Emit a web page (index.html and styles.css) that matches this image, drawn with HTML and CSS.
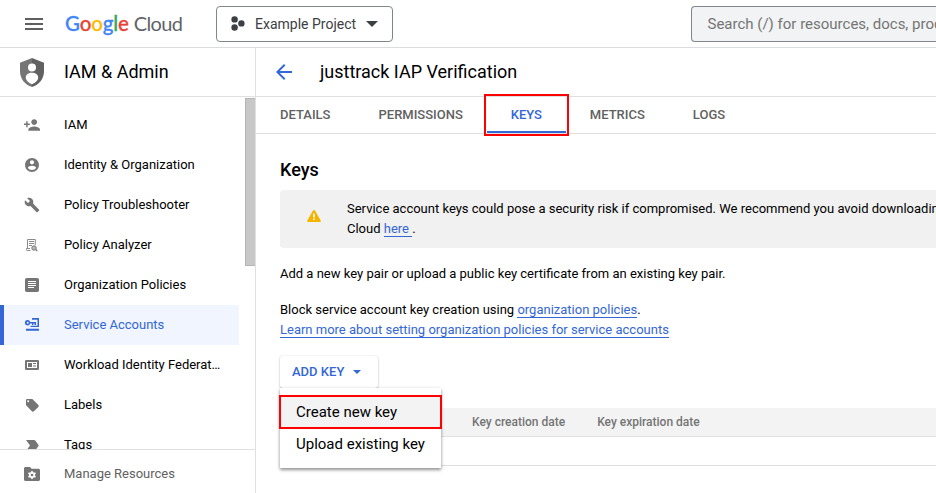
FILE: index.html
```html
<!DOCTYPE html>
<html lang="en">
<head>
<meta charset="utf-8">
<title>Service Accounts – Google Cloud</title>
<link rel="stylesheet" href="styles.css">
</head>
<body>
<header class="topbar">
  <svg class="hamburger" width="18" height="12" viewBox="0 0 18 12"><path d="M0 0h18v2H0zM0 5h18v2H0zM0 10h18v2H0z"/></svg>
  <div class="logo"><span class="google"><span class="blue">G</span><span class="red">o</span><span class="yellow">o</span><span class="blue">g</span><span class="green">l</span><span class="red">e</span></span><span class="cloud">Cloud</span></div>
  <button class="project">
    <svg width="14" height="16" viewBox="0 0 14 16"><circle cx="3.6" cy="3.4" r="3.2"/><circle cx="3.6" cy="11.5" r="3.2"/><circle cx="10.4" cy="7.4" r="3.2"/></svg>
    <span class="project-name">Example Project</span>
    <svg width="12" height="6" viewBox="0 0 12 6"><path d="M0 0h12L6 6z"/></svg>
  </button>
  <div class="search"><span>Search (/) for resources, docs, products, and more</span></div>
</header>
<div class="layout">
  <aside class="sidebar">
    <div class="product">
      <svg width="24" height="29" viewBox="0 0 24 29"><path fill="#757575" d="M12 0 0 4.8v8.4C0 20.500 5 27 12 29z"/><path fill="#616161" d="M12 0l12 4.800v8.400C24 20.500 19 27 12 29z"/><circle cx="12" cy="9.500" r="4" fill="#fff"/><path fill="#fff" d="M5.800 19.800c0-3.300 2.700-5 6.200-5s6.200 1.700 6.200 5c0 2.700-3.600 5.500-6.200 6.500-2.600-1-6.200-3.800-6.200-6.500z"/></svg>
      <span>IAM &amp; Admin</span>
    </div>
    <div class="nav-wrap">
      <nav class="nav">
        <a class="item"><svg viewBox="1 1 22 22"><path d="M15 12c2.210 0 4-1.790 4-4s-1.790-4-4-4-4 1.790-4 4 1.790 4 4 4zm-9-2V7H4v3H1v2h3v3h2v-3h3v-2H6zm9 4c-2.670 0-8 1.340-8 4v2h16v-2c0-2.660-5.330-4-8-4z"/></svg><span>IAM</span></a>
        <a class="item"><svg viewBox="0.500 0.500 23 23"><path d="M12 2C6.480 2 2 6.480 2 12s4.480 10 10 10 10-4.480 10-10S17.520 2 12 2zm0 3c1.660 0 3 1.340 3 3s-1.340 3-3 3-3-1.340-3-3 1.340-3 3-3zm0 14.200c-2.500 0-4.710-1.280-6-3.220.03-1.990 4-3.080 6-3.080 1.990 0 5.970 1.090 6 3.080-1.290 1.940-3.500 3.220-6 3.220z"/></svg><span>Identity &amp; Organization</span></a>
        <a class="item"><svg viewBox="0 0 24 24"><path d="M22.700 19l-9.100-9.100c.9-2.300.4-5-1.500-6.900-2-2-5-2.400-7.400-1.300L9 6 6 9 1.600 4.700C.4 7.100.9 10.100 2.900 12.100c1.900 1.900 4.600 2.400 6.900 1.500l9.100 9.100c.4.4 1 .4 1.400 0l2.300-2.300c.5-.4.5-1.100.1-1.400z"/></svg><span>Policy Troubleshooter</span></a>
        <a class="item"><svg viewBox="0 0 16 16"><path fill="none" stroke="#8a8a8a" d="M6.500 13.500H3.300c-.6 0-.8-.4-.8-.8V11.500H6M3.500 11V2.500h7.800V8"/><path fill="#8a8a8a" d="M5 4h5v1H5zM5 6h5v1H5zM5 8h3v1H5z"/><circle cx="10" cy="11" r="2.200" fill="#bbb" stroke="#757575"/><path d="M11.400 12.800l.9-.7 1.400 1.700-1 .8z"/></svg><span>Policy Analyzer</span></a>
        <a class="item"><svg viewBox="0 0 16 16"><rect x="1" y="1" width="14" height="14" rx="1.800"/><path fill="#fff" d="M4 4h8v1H4zM4 6h8v1H4zM4 8h8v1H4zM4 10h6v1H4z"/></svg><span>Organization Policies</span></a>
        <a class="item active"><svg viewBox="0 0 16 16"><path fill-rule="evenodd" d="M3.600 3a2.700 2.700 0 0 1 2.600 1.900H12V8h-1.500V6.500H9.300V8H8V6.500H6.100A2.700 2.700 0 1 1 3.600 3zM3.700 4.700a1 1 0 1 0 0 2 1 1 0 0 0 0-2z"/><path d="M8 1h7v9H6.500V8.700h7V2.700H8zM2 11.800h13v2H2z"/></svg><span>Service Accounts</span></a>
        <a class="item"><svg viewBox="0 0 16 16"><rect x="1" y="3" width="14" height="10" rx="1.200"/><path fill="#fff" d="M3 5h10v6H3z"/><path d="M4 6h4v4H4zM9 6h3v1H9zM9 8.500h3v1H9z"/></svg><span>Workload Identity Federation</span></a>
        <a class="item"><svg viewBox="0 0 24 24"><path d="M21.410 11.580l-9-9C12.050 2.220 11.550 2 11 2H4c-1.100 0-2 .9-2 2v7c0 .55.22 1.050.59 1.420l9 9c.36.36.86.58 1.410.58.55 0 1.050-.22 1.410-.59l7-7c.37-.36.59-.86.59-1.410 0-.55-.23-1.060-.59-1.420zM5.500 7C4.670 7 4 6.330 4 5.500S4.670 4 5.500 4 7 4.670 7 5.500 6.330 7 5.500 7z" transform="translate(1 1) scale(.96)"/></svg><span>Labels</span></a>
        <a class="item"><svg viewBox="0 0 16 16"><path d="M2 3h8c.6 0 1 .2 1.300.6L14.800 8.500l-3.500 4.900c-.3.400-.7.600-1.300.6H2l4-5.500z"/></svg><span>Tags</span></a>
      </nav>
      <div class="scrollbar"></div>
    </div>
    <a class="manage"><svg width="16" height="14" viewBox="0 0 16 14"><path d="M1.500 0H6l1.600 1.800h6.900c.8 0 1.500.6 1.500 1.500v9.200c0 .9-.7 1.500-1.500 1.500h-13C.7 14 0 13.400 0 12.500v-11C0 .6.700 0 1.500 0z"/><g fill="#fff"><circle cx="8" cy="8" r="3"/><path d="M7.200 3.900h1.600v8.200H7.200z"/><path d="M7.200 3.900h1.600v8.200H7.200z" transform="rotate(60 8 8)"/><path d="M7.200 3.900h1.600v8.200H7.200z" transform="rotate(-60 8 8)"/></g><circle cx="8" cy="8" r="1.300"/></svg><span>Manage Resources</span></a>
  </aside>
  <main class="main">
    <div class="titlebar">
      <svg width="16" height="16" viewBox="0 0 16 16"><path d="M16 7H3.830l5.590-5.590L8 0 0 8l8 8 1.410-1.410L3.830 9H16z"/></svg>
      <h1>justtrack IAP Verification</h1>
    </div>
    <div class="tabs">
      <a class="tab details">DETAILS</a><a class="tab permissions">PERMISSIONS</a><a class="tab keys">KEYS</a><a class="tab metrics">METRICS</a><a class="tab">LOGS</a>
    </div>
    <section class="content">
      <h2>Keys</h2>
      <div class="notice">
        <svg width="14" height="12" viewBox="0 0 14 12"><path fill="#f4b400" d="M6 .6c.4-.8 1.600-.8 2 0l5.700 9.800c.4.800-.1 1.600-1 1.600H1.300c-.9 0-1.400-.8-1-1.600z"/><path fill="#fff" d="M6.200 3.500h1.600v4H6.200zM6.200 8.500h1.600v1.600H6.200z"/></svg>
        <p>Service account keys could pose a security risk if compromised. We recommend you avoid downloading service account keys<br>Cloud <a class="link">here </a>.</p>
      </div>
      <p class="intro">Add a new key pair or upload a public key certificate from an existing key pair.</p>
      <p class="policy">Block service account key creation using <a class="link">organization policies</a>.<br><a class="link">Learn more about setting organization policies for service accounts</a></p>
      <div class="add">
        <button class="add-key"><span>ADD KEY</span><svg width="8" height="4" viewBox="0 0 8 4"><path d="M0 0h8L4 4z"/></svg></button>
        <div class="menu">
          <div class="option selected">Create new key</div>
          <div class="option">Upload existing key</div>
        </div>
      </div>
      <div class="table">
        <div class="thead"><span class="created">Key creation date</span><span>Key expiration date</span></div>
        <div class="row"></div>
      </div>
    </section>
  </main>
</div>
</body>
</html>
```
FILE: styles.css
```css
* { box-sizing: border-box; }
html, body { margin: 0; height: 493px; overflow: hidden; }
body { display: flex; flex-direction: column; background: #fff; color: #000; font: 13px/20px Roboto, Arial, sans-serif; }
svg { display: block; flex: none; }
button { font-family: inherit; margin: 0; background: #fff; }
h1, h2, p { margin: 0; }

.topbar { display: flex; align-items: center; height: 48px; padding-left: 25px; border-bottom: 1px solid #dadce0; flex: none; }
.hamburger { fill: #5f5f5f; }
.logo { display: flex; gap: 5px; width: 117px; margin: 0 0 2px 22px; font: 20.500px/24px Lato, sans-serif; white-space: nowrap; }
.google { font-weight: 500; letter-spacing: -.15px; -webkit-text-stroke: .3px; }
.cloud { color: #5f6368; font-size: 20px; letter-spacing: -.65px; }
.blue { color: #4285f4; }
.red { color: #ea4335; }
.yellow { color: #fbbc04; }
.green { color: #34a853; }
.project { display: flex; align-items: center; width: 177px; height: 36px; margin-left: 34px; padding: 0 14px; border: 1px solid #80868b; border-radius: 4px; color: #3c4043; fill: #3c4043; font-size: 14px; }
.project-name { margin: 0 auto 0 10px; white-space: nowrap; }
.search { display: flex; align-items: center; flex: 1; min-width: 0; height: 36px; margin-left: 298px; padding-left: 15.500px; border: 1px solid #80868b; border-right: 0; border-radius: 4px 0 0 4px; background: #f1f3f4; color: #757575; font-size: 15px; white-space: nowrap; overflow: hidden; }

.layout { display: flex; flex: 1; min-height: 0; }
.sidebar { display: flex; flex-direction: column; width: 256px; flex: none; border-right: 1px solid #e0e0e0; }
.product { display: flex; align-items: center; gap: 20px; height: 49px; padding-left: 20px; border-bottom: 1px solid #e0e0e0; font-size: 18px; flex: none; }
.nav-wrap { display: flex; justify-content: space-between; flex: 1; min-height: 0; overflow: hidden; }
.nav { width: 239px; padding-top: 8px; }
.item { display: flex; align-items: center; height: 40px; padding: 0 18px 0 24px; }
.item svg { width: 16px; height: 16px; margin-right: 24px; fill: #757575; }
.item span { overflow: hidden; white-space: nowrap; text-overflow: ellipsis; }
.active { background: #f0f5ff; border-left: 4px solid #3367d6; padding-left: 20px; color: #3367d6; }
.active svg { fill: #3367d6; }
.scrollbar { width: 10px; height: 168px; margin-top: 1px; background: #c8c8c8; border: 1px solid #b4b4b4; border-right: 0; }
.manage { display: flex; align-items: center; gap: 24px; height: 44px; padding: 5px 0 0 24px; border-top: 1px solid #e0e0e0; color: #616161; fill: #757575; flex: none; }

.main { flex: 1; min-width: 0; overflow: hidden; }
.titlebar { display: flex; align-items: center; gap: 28px; height: 49px; padding-left: 20px; border-bottom: 1px solid #e0e0e0; fill: #3367d6; }
.titlebar h1 { font: 400 18px/24px Roboto, sans-serif; }
.tabs { display: flex; height: 37px; padding-left: 24px; border-bottom: 1px solid #e0e0e0; font-weight: 500; line-height: 36px; color: #616161; }
.details { margin-right: 48px; }
.permissions { margin-right: 21px; }
.keys { position: relative; display: flex; justify-content: center; width: 85px; height: 42px; margin: -3px 21px 0 0; padding-top: 3px; color: #3367d6; background: linear-gradient(#3367d6, #3367d6) 3px 37px / 79px 2px no-repeat; box-shadow: inset 0 0 0 2px #f00; }
.metrics { margin-right: 48px; }
.content { padding-left: 24px; }
h2 { padding-top: 24px; font: 500 18px/24px Roboto, sans-serif; }
.notice { display: flex; height: 58px; margin-top: 8px; padding: 9px 0 0 27px; border-radius: 4px 0 0 4px; background: #f1f1f1; white-space: nowrap; }
.notice svg { margin: 11px 26px 0 0; }
.link { color: #3367d6; border-bottom: 1px solid #3367d6; white-space: pre; }
.intro { margin-top: 16px; }
.policy { margin-top: 16px; }
.add { position: relative; margin-top: 16px; height: 32px; }
.add-key { display: flex; align-items: center; gap: 9px; width: 98px; height: 32px; padding: 0 12px; border: 0; border-radius: 3px; color: #3367d6; fill: #3367d6; font-size: 13px; font-weight: 500; white-space: nowrap; box-shadow: 0 1px 2px rgba(0,0,0,.26), 0 0 2px rgba(0,0,0,.12); }
.add-key span { padding-bottom: 2px; }
.menu { position: absolute; left: 0; top: 32px; width: 161px; height: 80px; padding-top: 8px; background: #fff; box-shadow: 0 2px 3px rgba(0,0,0,.35), 0 1px 4px rgba(0,0,0,.15); font-size: 15px; }
.option { height: 32px; padding-left: 16px; line-height: 32px; white-space: nowrap; }
.selected { background: #f3f3f3; height: 34px; width: 163px; margin: -1px -1px -1px; padding-left: 17px; box-shadow: inset 0 0 0 2px #f00; line-height: 34px; }
.table { margin-top: 20px; }
.thead { display: flex; height: 29px; padding-left: 192px; background: #f3f3f3; border-bottom: 1px solid #e0e0e0; color: #757575; font-size: 12px; font-weight: 500; line-height: 28px; }
.created { margin-right: 32px; }
.row { height: 29px; border-bottom: 1px solid #e0e0e0; }
```
